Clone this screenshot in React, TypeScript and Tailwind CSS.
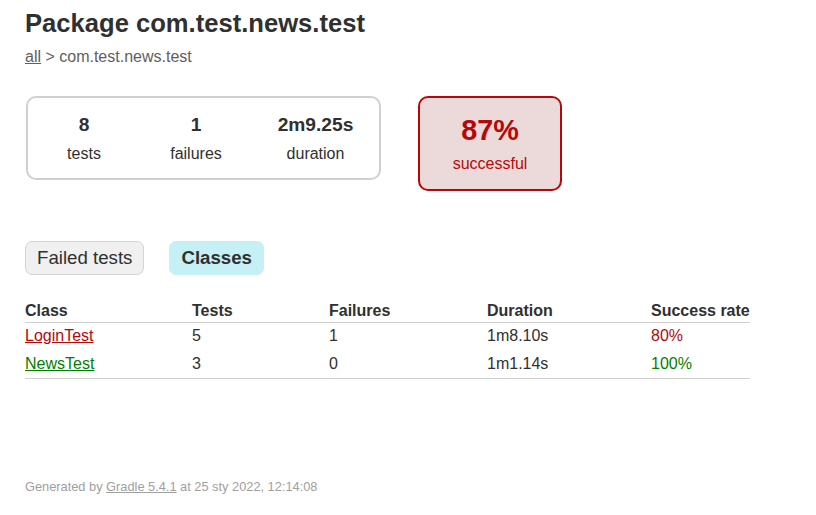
const rows = [
  { name: 'LoginTest', tests: 5, failures: 1, duration: '1m8.10s', rate: '80%', ok: false },
  { name: 'NewsTest', tests: 3, failures: 0, duration: '1m1.14s', rate: '100%', ok: true },
]

const Counter = ({ value, label, w }: { value: string; label: string; w: string }) => (
  <div className={`${w} pt-[16px] pb-[14px] text-center`}>
    <p className="text-[19.2px] font-bold leading-[22px] mb-[8px]">{value}</p>
    <p className="text-[16px] leading-[20px]">{label}</p>
  </div>
)

export default function App() {
  return (
    <div className="min-h-[515px] bg-white text-[#303030] px-[25px] pt-[9px]" style={{ fontFamily: '"Liberation Sans", Arial, sans-serif' }}>
      <h1 className="text-[25.6px] font-bold leading-[29px]">Package com.test.news.test</h1>
      <div className="mt-[10px] text-[16px] leading-[18px] text-[#606060]">
        <a className="underline text-[#606060]">all</a> &gt; com.test.news.test
      </div>

      <div className="flex items-start mt-[30px]">
        <div className="flex border-2 border-[#d0d0d0] rounded-[10px] ml-[1px]">
          <Counter value="8" label="tests" w="w-[112px]" />
          <Counter value="1" label="failures" w="w-[112px]" />
          <Counter value="2m9.25s" label="duration" w="w-[127px]" />
        </div>
        <div className="ml-[37px] w-[144px] border-2 border-[#b60808] bg-[#ecdada] rounded-[10px] pt-[16px] pb-[16px] text-center text-[#b60808]">
          <p className="text-[28.8px] font-bold leading-[33px] mb-[8px]">87%</p>
          <p className="text-[16px] leading-[18px]">successful</p>
        </div>
      </div>

      <div className="flex mt-[50px] text-[18.67px] leading-[22px]">
        <div className="px-[11px] py-[5px] border border-[#d4d4d4] bg-[#f0f0f0] rounded-[7px] mr-[25px]">Failed tests</div>
        <div className="px-[11px] py-[5px] border border-[#c5f0f5] bg-[#c5f0f5] rounded-[7px] font-bold">Classes</div>
      </div>

      <table className="mt-[19px] border-collapse text-[16px] leading-[18px]">
        <thead>
          <tr className="h-[28px] border-b border-[#d0d0d0] text-left">
            <th className="w-[167px] p-0 pb-[2px] align-bottom font-bold">Class</th>
            <th className="w-[137px] p-0 pb-[2px] align-bottom font-bold">Tests</th>
            <th className="w-[158px] p-0 pb-[2px] align-bottom font-bold">Failures</th>
            <th className="w-[164px] p-0 pb-[2px] align-bottom font-bold">Duration</th>
            <th className="w-[99px] p-0 pb-[2px] align-bottom font-bold">Success rate</th>
          </tr>
        </thead>
        <tbody>
          {rows.map((r, i) => (
            <tr key={r.name} className={`h-[28px] ${i === rows.length - 1 ? 'border-b border-[#d0d0d0]' : ''}`}>
              <td className="p-0">
                <a className={`underline ${r.ok ? 'text-[#008000]' : 'text-[#b60808]'}`}>{r.name}</a>
              </td>
              <td className="p-0">{r.tests}</td>
              <td className="p-0">{r.failures}</td>
              <td className="p-0">{r.duration}</td>
              <td className={`p-0 ${r.ok ? 'text-[#008000]' : 'text-[#b60808]'}`}>{r.rate}</td>
            </tr>
          ))}
        </tbody>
      </table>

      <div className="mt-[100px] text-[12.8px] leading-[15px] text-[#a0a0a0]">
        Generated by <a className="underline text-[#a0a0a0]">Gradle 5.4.1</a> at 25 sty 2022, 12:14:08
      </div>
    </div>
  )
}
